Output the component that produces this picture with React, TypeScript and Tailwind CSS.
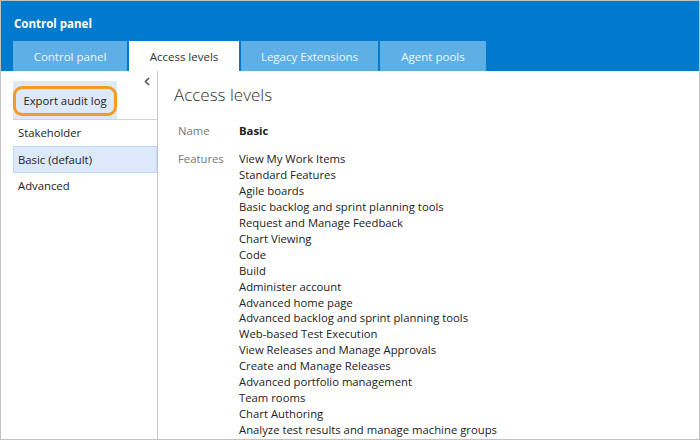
const FEATURES = [
  "View My Work Items",
  "Standard Features",
  "Agile boards",
  "Basic backlog and sprint planning tools",
  "Request and Manage Feedback",
  "Chart Viewing",
  "Code",
  "Build",
  "Administer account",
  "Advanced home page",
  "Advanced backlog and sprint planning tools",
  "Web-based Test Execution",
  "View Releases and Manage Approvals",
  "Create and Manage Releases",
  "Advanced portfolio management",
  "Team rooms",
  "Chart Authoring",
  "Analyze test results and manage machine groups",
];

const TABS = ["Control panel", "Access levels", "Legacy Extensions", "Agent pools"];
const TAB_WIDTHS = ["w-[114px]", "w-[110px]", "w-[137px]", "w-[106px]"];

export default function App() {
  return (
    <div
      className="w-[700px] h-[440px] border border-[#c2c2c2] flex flex-col overflow-hidden bg-white text-[11.3px] text-[#222]"
      style={{ fontFamily: '"Segoe UI", "Open Sans", sans-serif' }}
    >
      {/* header */}
      <div className="bg-[#007acc] h-[70px] flex flex-col shrink-0">
        <div className="h-[40px] flex items-center pl-[13px] pt-[5px] text-white font-bold text-[11.5px]">
          Control panel
        </div>
        <div className="flex h-[30px] pl-[12px] gap-[2px]">
          {TABS.map((t, i) => (
            <div
              key={t}
              className={`${TAB_WIDTHS[i]} flex items-center justify-center text-[11.5px] pt-[1px] ${
                i === 1 ? "bg-white text-[#333]" : "bg-[#5eafe6] text-[#eef6fc]"
              }`}
            >
              {t}
            </div>
          ))}
        </div>
      </div>

      <div className="flex flex-1 min-h-0">
        {/* sidebar */}
        <div className="w-[157px] shrink-0 border-r border-[#c8c8c8] pl-[12px] flex flex-col relative">
          <svg className="absolute right-[7px] top-[6px]" width="6" height="9" viewBox="0 0 6 9">
            <path d="M5 1 L1.5 4.5 L5 8" fill="none" stroke="#555" strokeWidth="1.6" />
          </svg>
          <div className="mt-[10px] w-[104px] h-[38px] bg-[#dde9f7] flex items-start pt-[5px]">
            <div className="w-full h-[30px] rounded-[9px] border-[3px] border-[#f59a23] flex items-center justify-center text-[#222]">
              Export audit log
            </div>
          </div>
          <div className="border-t border-[#d4d4d4]">
            <div className="h-[26px] flex items-center pl-[5px] pt-[1px]">Stakeholder</div>
            <div className="h-[27px] flex items-center pl-[4px] pt-[1px] bg-[#dce9fb] border border-[#bcd6f7]">
              Basic (default)
            </div>
            <div className="h-[26px] flex items-center pl-[5px] pt-[1px]">Advanced</div>
          </div>
        </div>

        {/* main */}
        <div className="flex-1 pl-[16px] pt-[12px]">
          <div className="text-[17px] font-light text-[#333] leading-[24px]">Access levels</div>
          <div className="mt-[16px] flex">
            <div className="w-[65px] pl-[4px] text-[#777]">Name</div>
            <div className="font-bold">Basic</div>
          </div>
          <div className="mt-[11px] flex">
            <div className="w-[65px] pl-[4px] text-[#777] leading-[16px]">Features</div>
            <div className="flex flex-col leading-[15.95px]">
              {FEATURES.map((f) => (
                <div key={f}>{f}</div>
              ))}
            </div>
          </div>
        </div>
      </div>
    </div>
  );
}
